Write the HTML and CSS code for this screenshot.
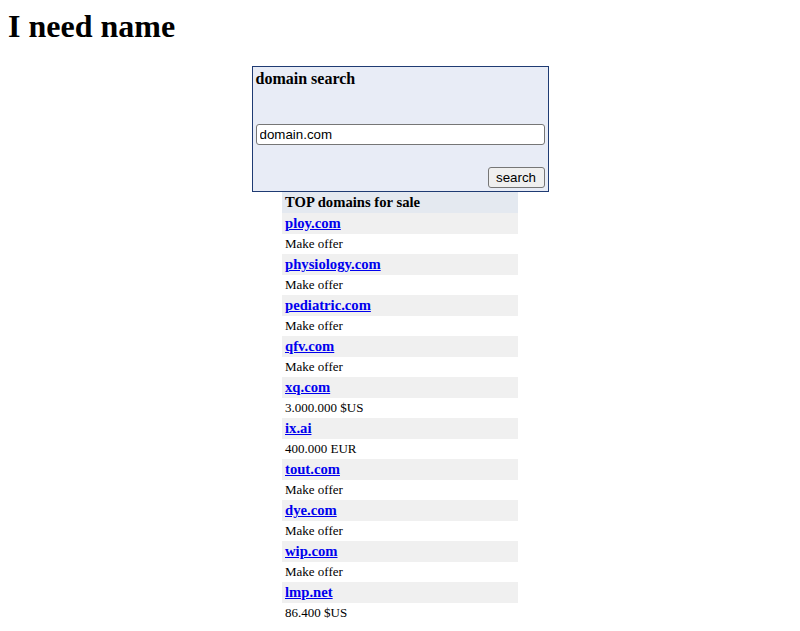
FILE: index.html
```html
<!DOCTYPE html>
<html>
<head>
  <title>I need name</title>
  <link rel="stylesheet" href="styles.css">
</head>
<body>
  <h1>I need name</h1>

  <form class="search-box" onsubmit="return false;">
    <div class="search-title">domain search</div>
    <input class="search-input" type="text" value="domain.com">
    <div class="search-actions">
      <button class="search-button" type="submit">search</button>
    </div>
  </form>

  <table class="top-list">
    <tr class="top-head"><th>TOP domains for sale</th></tr>
    <tr class="name-row"><td><a href="#">ploy.com</a></td></tr>
    <tr class="price-row"><td>Make offer</td></tr>
    <tr class="name-row"><td><a href="#">physiology.com</a></td></tr>
    <tr class="price-row"><td>Make offer</td></tr>
    <tr class="name-row"><td><a href="#">pediatric.com</a></td></tr>
    <tr class="price-row"><td>Make offer</td></tr>
    <tr class="name-row"><td><a href="#">qfv.com</a></td></tr>
    <tr class="price-row"><td>Make offer</td></tr>
    <tr class="name-row"><td><a href="#">xq.com</a></td></tr>
    <tr class="price-row"><td>3.000.000 $US</td></tr>
    <tr class="name-row"><td><a href="#">ix.ai</a></td></tr>
    <tr class="price-row"><td>400.000 EUR</td></tr>
    <tr class="name-row"><td><a href="#">tout.com</a></td></tr>
    <tr class="price-row"><td>Make offer</td></tr>
    <tr class="name-row"><td><a href="#">dye.com</a></td></tr>
    <tr class="price-row"><td>Make offer</td></tr>
    <tr class="name-row"><td><a href="#">wip.com</a></td></tr>
    <tr class="price-row"><td>Make offer</td></tr>
    <tr class="name-row"><td><a href="#">lmp.net</a></td></tr>
    <tr class="price-row"><td>86.400 $US</td></tr>
  </table>
</body>
</html>
```

FILE: styles.css
```css
body {
  margin: 8px;
  font-family: "Liberation Serif", "Times New Roman", serif;
  color: #000;
  background: #fff;
}

h1 {
  margin: 0 0 21px;
  font-size: 32px;
  font-weight: bold;
}

.search-box {
  box-sizing: border-box;
  width: 297px;
  margin: 0 auto;
  padding: 3px 3px 3px;
  border: 1px solid #1f3b73;
  background-color: #e8ecf6;
}

.search-title {
  height: 18px;
  font-size: 16px;
  font-weight: bold;
  line-height: 18px;
}

.search-input {
  display: block;
  box-sizing: border-box;
  width: 100%;
  height: 21px;
  margin: 36px 0 0;
  padding: 1px 3px;
  border: 1px solid #767676;
  border-radius: 3px;
  background: #fff;
  font-family: "Liberation Sans", Arial, sans-serif;
  font-size: 13.33px;
  color: #000;
}

.search-actions {
  display: flex;
  justify-content: flex-end;
  margin-top: 22px;
}

.search-button {
  box-sizing: border-box;
  width: 57px;
  height: 21px;
  padding: 0;
  border: 1px solid #767676;
  border-radius: 3px;
  background-color: #efefef;
  font-family: "Liberation Sans", Arial, sans-serif;
  font-size: 13.33px;
  color: #000;
}

.top-list {
  width: 236px;
  margin: 0 auto;
  border-collapse: collapse;
}

.top-list th,
.top-list td {
  padding: 0 2px 0 3px;
  text-align: left;
}

.top-head th {
  height: 21px;
  background-color: #e4e9f0;
  font-size: 11pt;
}

.name-row td {
  height: 21px;
  background-color: #f0f0f0;
  font-size: 11pt;
  font-weight: bold;
}

.name-row a {
  color: #0000ee;
}

.price-row td {
  height: 20px;
  font-size: 13px;
}
```
